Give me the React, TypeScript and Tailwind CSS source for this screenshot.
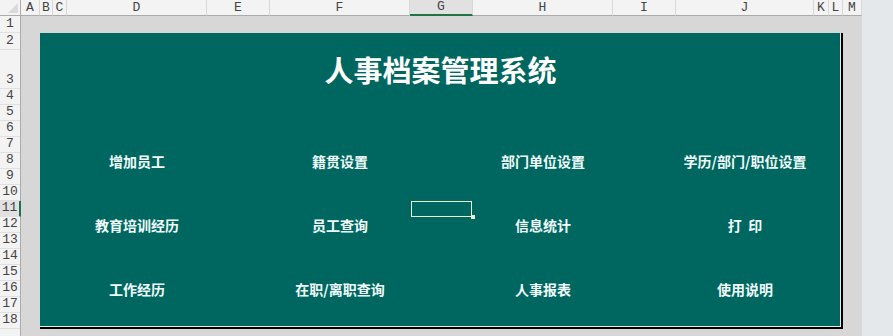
const columns = [
    { label: 'A', width: 'w-[19px]' },
    { label: 'B', width: 'w-[13px]' },
    { label: 'C', width: 'w-[14px]' },
    { label: 'D', width: 'w-[140px]' },
    { label: 'E', width: 'w-[63px]' },
    { label: 'F', width: 'w-[140px]' },
    { label: 'G', width: 'w-[63px]', active: true },
    { label: 'H', width: 'w-[140px]' },
    { label: 'I', width: 'w-[63px]' },
    { label: 'J', width: 'w-[138px]' },
    { label: 'K', width: 'w-[15px]' },
    { label: 'L', width: 'w-[14px]' },
    { label: 'M', width: 'w-[19px]' },
]

const rows = [
    { label: '1', height: 'h-[17px]' },
    { label: '2', height: 'h-[17px]' },
    { label: '3', height: 'h-[39px]' },
    ...Array.from({ length: 15 }, (_, i) => ({
        label: String(i + 4),
        height: 'h-[16px]',
    })),
    // row 19 is mostly below the window edge, so no label
    { label: '', height: 'h-[16px]' },
]

const buttons = [
    { text: '增加员工', place: 'col-start-3 row-start-7' },
    { text: '籍贯设置', place: 'col-start-5 row-start-7' },
    { text: '部门单位设置', place: 'col-start-7 row-start-7' },
    { text: '学历/部门/职位设置', place: 'col-start-9 row-start-7' },
    { text: '教育培训经历', place: 'col-start-3 row-start-11' },
    { text: '员工查询', place: 'col-start-5 row-start-11' },
    { text: '信息统计', place: 'col-start-7 row-start-11' },
    { text: '打  印', place: 'col-start-9 row-start-11' },
    { text: '工作经历', place: 'col-start-3 row-start-15' },
    { text: '在职/离职查询', place: 'col-start-5 row-start-15' },
    { text: '人事报表', place: 'col-start-7 row-start-15' },
    { text: '使用说明', place: 'col-start-9 row-start-15' },
]

const headerFont = "font-['Liberation_Mono','DejaVu_Sans_Mono',monospace]"

const App = () => {
    return (
        <div className="w-[893px] h-[336px] overflow-hidden flex flex-col bg-[#e4e8ea]">
            {/* column headers */}
            <div className="flex h-[16px] shrink-0">
                <div className="w-[21px] h-full bg-[#f3f3f3] border-r border-b border-[#ababab] relative overflow-hidden">
                    <div className="absolute right-[2px] bottom-[2px] w-0 h-0 border-l-[10px] border-l-transparent border-b-[10px] border-b-[#dadada]" />
                </div>
                {columns.map((col) => (
                    <div
                        key={col.label}
                        className={`${col.width} h-full flex items-center justify-center text-[13px] text-[#444] border-r border-[#d8d8d8] ${headerFont} ${
                            col.active
                                ? 'bg-[#e1e1e1] border-b-2 border-b-[#217346]'
                                : 'bg-[#f3f3f3] border-b border-b-[#ababab]'
                        }`}
                    >
                        {col.label}
                    </div>
                ))}
            </div>
            <div className="flex flex-1 min-h-0">
                {/* row headers */}
                <div className="w-[21px] shrink-0 flex flex-col border-r border-[#ababab] bg-[#f3f3f3]">
                    {rows.map((row, i) => (
                        <div
                            key={i}
                            className={`${row.height} shrink-0 flex items-end justify-center pb-[1px] leading-[14px] text-[13px] text-[#444] border-b border-[#e0e0e0] ${headerFont} ${
                                row.label === '11'
                                    ? 'bg-[#e1e1e1] border-r-2 border-r-[#217346] -mr-[1px]'
                                    : ''
                            }`}
                        >
                            {row.label}
                        </div>
                    ))}
                </div>
                {/* sheet area */}
                <div className="w-[841px] shrink-0 bg-[#d7d7d7] flex flex-col">
                    <div className="h-[17px] shrink-0" />
                    <div className="flex">
                        <div className="w-[19px] shrink-0" />
                        <div className="w-[803px] h-[296px] bg-[#006660] border-r-2 border-b-2 border-black shadow-[inset_-1px_-1px_0_#e8e8e8] grid grid-cols-[13px_14px_140px_63px_140px_63px_140px_63px_138px_15px_12px] grid-rows-[17px_39px_repeat(14,16px)_14px] font-['Noto_Sans_CJK_SC','Noto_Sans',sans-serif]">
                            <div className="col-span-full row-start-2 flex items-center justify-center text-white text-[29px] font-bold leading-none">
                                人事档案管理系统
                            </div>
                            {buttons.map((b) => (
                                <div
                                    key={b.text}
                                    className={`${b.place} flex items-center justify-center whitespace-pre text-[14px] font-bold text-[#effcfb] leading-none`}
                                >
                                    {b.text}
                                </div>
                            ))}
                            <div className="col-start-6 row-start-10 relative">
                                <div className="ml-[1px] w-[61px] h-[16px] border border-[#edf2cf]" />
                                <div className="absolute right-[-2px] bottom-[-2px] w-[4px] h-[4px] bg-[#edf2cf]" />
                            </div>
                        </div>
                    </div>
                </div>
            </div>
        </div>
    )
}

export default App
